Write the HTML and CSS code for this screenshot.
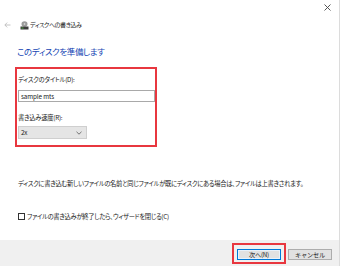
FILE: index.html
```html
<!DOCTYPE html>
<html lang="ja">
<head>
  <meta charset="UTF-8">
  <title>ディスクへの書き込み</title>
  <link rel="stylesheet" href="styles.css">
</head>
<body>
  <div class="window">
    <div class="titlebar">
      <svg class="close" width="7" height="7" viewBox="0 0 7 7">
        <path d="M0.5 0.5 L6.5 6.5 M6.5 0.5 L0.5 6.5" stroke="#444" stroke-width="0.9" fill="none"/>
      </svg>
    </div>

    <div class="nav">
      <svg class="back" width="7" height="6" viewBox="0 0 7 6">
        <path d="M6.5 3 H1 M3.2 0.6 L0.8 3 L3.2 5.4" stroke="#b5b5b5" stroke-width="0.8" fill="none"/>
      </svg>
      <svg class="drive" width="9" height="9" viewBox="0 0 9 9">
        <ellipse cx="4.5" cy="3" rx="3" ry="2.8" fill="#9b9b9b"/>
        <ellipse cx="4.5" cy="3" rx="0.8" ry="0.7" fill="#e6e6e6"/>
        <rect x="0.5" y="5.5" width="8" height="3" fill="#3b3b3b"/>
        <rect x="1.5" y="6.6" width="2" height="0.9" fill="#4cbb3c"/>
      </svg>
      <span class="nav-title">ディスクへの書き込み</span>
    </div>

    <main class="content">
      <h1>このディスクを準備します</h1>

      <div class="group">
        <div class="label">ディスクのタイトル(D):</div>
        <input class="field" type="text" value="sample mts">
        <div class="label second">書き込み速度(R):</div>
        <div class="select">
          <span>2x</span>
          <svg width="6" height="4" viewBox="0 0 6 4">
            <path d="M0.5 0.8 L3 3.2 L5.5 0.8" stroke="#555" stroke-width="0.8" fill="none"/>
          </svg>
        </div>
      </div>

      <p class="note">ディスクに書き込む新しいファイルの名前と同じファイルが既にディスクにある場合は、ファイルは上書きされます。</p>

      <div class="check">
        <span class="box"></span>
        <span>ファイルの書き込みが終了したら、ウィザードを閉じる(C)</span>
      </div>
    </main>

    <footer class="footer">
      <span class="hl"><button class="btn primary">次へ(N)</button></span>
      <button class="btn">キャンセル</button>
    </footer>
  </div>
</body>
</html>
```

FILE: styles.css
```css
html, body {
  margin: 0;
  padding: 0;
  background: #fff;
}

body {
  font-family: "Noto Sans CJK JP", "Noto Sans", sans-serif;
  font-feature-settings: "palt";
  font-size: 6.3px;
  letter-spacing: -0.25px;
  color: #1a1a1a;
  overflow: hidden;
}

.window {
  width: 340px;
  height: 266px;
  box-sizing: border-box;
  border-right: 1px solid #dcdcdc;
  display: flex;
  flex-direction: column;
}

.titlebar {
  height: 15px;
  display: flex;
  justify-content: flex-end;
  align-items: center;
  padding-right: 8px;
}

.nav {
  height: 20px;
  display: flex;
  align-items: center;
  padding-left: 4px;
}

.nav .back {
  margin-right: 9px;
}

.nav .drive {
  margin-right: 1px;
}

.nav-title {
  font-size: 6px;
  letter-spacing: -0.4px;
  line-height: 10px;
}

.content {
  flex: 1;
  padding-left: 15px;
}

h1 {
  margin: 10px 0 0 2px;
  font-size: 8.5px;
  letter-spacing: -0.4px;
  line-height: 12px;
  font-weight: normal;
  color: #1546b4;
}

.group {
  width: 142px;
  height: 80px;
  margin-top: 10px;
  box-sizing: border-box;
  border: 2px solid #e8373f;
  padding: 6px 0 0 1px;
}

.label {
  line-height: 10px;
}

.label.second {
  margin-top: 11px;
}

.field {
  display: block;
  width: 137px;
  height: 12px;
  margin: 5px 0 0 0;
  box-sizing: border-box;
  border: 1px solid #a9a9a9;
  padding: 0 2px;
  font-family: inherit;
  font-size: 6.3px;
  letter-spacing: -0.1px;
  color: #1a1a1a;
  outline: none;
}

.select {
  width: 69px;
  height: 13px;
  margin-top: 3px;
  box-sizing: border-box;
  border: 1px solid #cfcfcf;
  background: #e5e5e5;
  display: flex;
  align-items: center;
  justify-content: space-between;
  padding: 0 4px 0 2px;
}

.note {
  margin: 32px 0 0 3px;
  line-height: 10px;
  letter-spacing: -0.3px;
}

.check {
  margin: 22px 0 0 3px;
  height: 10px;
  display: flex;
  align-items: center;
  gap: 2px;
  letter-spacing: -0.3px;
}

.check .box {
  width: 7px;
  height: 7px;
  box-sizing: border-box;
  border: 1px solid #333;
  background: #fff;
}

.footer {
  height: 26px;
  background: #f0f0f0;
  display: flex;
  justify-content: flex-end;
  align-items: flex-start;
  gap: 7px;
  padding: 9px 7px 0 0;
  box-sizing: border-box;
}

.hl {
  position: relative;
  display: block;
}

.hl::after {
  content: '';
  position: absolute;
  top: -6px;
  left: -5px;
  right: -5px;
  bottom: -4px;
  border: 2px solid #e8373f;
}

.btn {
  display: block;
  width: 44px;
  height: 11px;
  margin: 0;
  padding: 0;
  box-sizing: border-box;
  border: 1px solid #adadad;
  background: #e1e1e1;
  font-family: inherit;
  font-size: 6.2px;
  letter-spacing: -0.2px;
  line-height: 9px;
  color: #1a1a1a;
}

.btn.primary {
  border-color: #0078d7;
  box-shadow: inset 0 0 0 1px #e8f2fb;
}
```
